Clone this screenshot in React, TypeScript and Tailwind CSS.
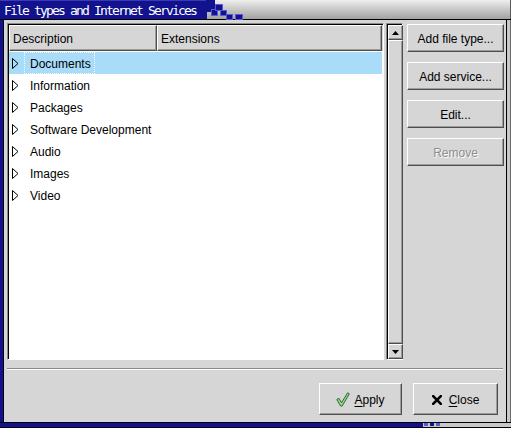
import React from "react";

const rows = ["Documents", "Information", "Packages", "Software Development", "Audio", "Images", "Video"];

function Raised({ className = "", children }: { className?: string; children?: React.ReactNode }) {
  return (
    <div
      className={
        "border-t border-l border-t-white border-l-white border-b border-r border-b-[#4e4e4e] border-r-[#4e4e4e] shadow-[inset_-1px_-1px_0_#9c9c9c] bg-[#d6d6d6] " +
        className
      }
    >
      {children}
    </div>
  );
}

function Tri() {
  return (
    <svg width="7" height="11" viewBox="0 0 7 11" className="shrink-0">
      <path d="M0.5 0.5 L6 5.5 L0.5 10.5 Z" fill="none" stroke="#000" strokeWidth="1" />
    </svg>
  );
}

function Arrow({ up }: { up?: boolean }) {
  return (
    <svg width="7" height="4" viewBox="0 0 7 4">
      {up ? <path d="M0 4 L3.5 0 L7 4 Z" fill="#000" /> : <path d="M0 0 L3.5 4 L7 0 Z" fill="#000" />}
    </svg>
  );
}

export default function App() {
  return (
    <div className="relative w-[511px] h-[428px] flex flex-col overflow-hidden bg-[#d6d6d6] font-['Liberation_Sans',Arial,sans-serif] text-[12px] text-black">
      {/* Title bar */}
      <div className="relative h-[20px] flex border-b border-black shrink-0">
        <div className="w-[207px] bg-[#12128e] border-t border-t-[#3a3ab4] pl-[4px] pt-[2px] text-white font-['DejaVu_Sans_Mono',monospace] text-[13px] leading-[15px] tracking-[-1.83px] whitespace-nowrap">
          File types and Internet Services
        </div>
        <div className="flex-1 bg-linear-to-b from-[#efefef] to-[#a2a2a2] border-r border-r-[#5a5a5a]" />
        <div className="absolute left-[206px] top-0 w-[9px] h-[12px] bg-[#12128e]" />
        <div className="absolute left-[211px] top-[9px] w-[7px] h-[7px] bg-[#12128e] border border-[#5a5ad0]" />
        <div className="absolute left-[215px] top-[4px] w-[8px] h-[7px] bg-[#12128e] border border-[#5a5ad0]" />
        <div className="absolute left-[220px] top-[10px] w-[7px] h-[6px] bg-[#12128e] border border-[#5a5ad0]" />
        <div className="absolute left-[226px] top-[14px] w-[7px] h-[6px] bg-[#12128e] border border-[#5a5ad0]" />
        <div className="absolute left-[235px] top-[14px] w-[8px] h-[6px] bg-[#12128e] border border-[#5a5ad0]" />
      </div>

      {/* Middle */}
      <div className="flex flex-1 min-h-0">
        <div className="w-[4px] bg-[#12128e] border-r border-black" />
        <div className="w-[502px] flex flex-col bg-[#d6d6d6]">
          <div className="flex pt-[3px] pl-[3px]">
            {/* List */}
            <div className="w-[377px] h-[337px] border-t border-l border-t-[#8a8a8a] border-l-[#8a8a8a] border-b border-r border-b-white border-r-white">
              <div className="w-full h-full bg-white border-t border-l border-t-black border-l-black flex flex-col">
                <div className="flex h-[26px] shrink-0 bg-[#d6d6d6]">
                  <Raised className="w-[148px] h-full flex items-center pl-[3px] pt-[2px]">Description</Raised>
                  <Raised className="flex-1 h-full flex items-center pl-[3px] pt-[2px] mr-[1px]">Extensions</Raised>
                </div>
                <div className="flex flex-col mt-[1px] mr-[1px]">
                  {rows.map((r, i) => (
                    <div key={r} className={"h-[22px] flex items-center pl-[3px] " + (i === 0 ? "bg-[#a8dcf9]" : "")}>
                      <Tri />
                      <div
                        className={
                          "ml-[5px] h-full flex items-center pl-[5px] pr-[3px] pt-[2px] border border-dotted " +
                          (i === 0 ? "border-white" : "border-transparent")
                        }
                      >
                        {r}
                      </div>
                    </div>
                  ))}
                </div>
              </div>
            </div>

            {/* Scrollbar */}
            <div className="ml-[2px] w-[17px] h-[337px] border-t border-l border-t-[#8a8a8a] border-l-[#8a8a8a] border-b border-r border-b-white border-r-white">
              <div className="w-full h-full bg-[#c4c4c4] border-t border-l border-t-black border-l-black flex flex-col">
                <Raised className="h-[15px] w-[15px] shrink-0 flex items-center justify-center">
                  <Arrow up />
                </Raised>
                <Raised className="flex-1 w-[15px]" />
                <Raised className="h-[15px] w-[15px] shrink-0 flex items-center justify-center">
                  <Arrow />
                </Raised>
              </div>
            </div>

            {/* Buttons */}
            <div className="ml-[4px] mt-[1px] w-[97px] flex flex-col gap-[10px]">
              <Raised className="h-[28px] flex items-center justify-center pt-[2px]">Add file type...</Raised>
              <Raised className="h-[28px] flex items-center justify-center pt-[2px]">Add service...</Raised>
              <Raised className="h-[28px] flex items-center justify-center pt-[2px]">Edit...</Raised>
              <Raised className="h-[28px] flex items-center justify-center pt-[2px] text-[#8e8e8e] [text-shadow:1px_1px_0_#ffffff]">
                Remove
              </Raised>
            </div>
          </div>

          {/* Separator */}
          <div className="mt-[8px] mx-[3px] h-[2px] border-t border-t-[#8a8a8a] border-b border-b-white" />

          {/* Bottom buttons */}
          <div className="mt-[13px] flex justify-end pr-[8px] gap-[11px]">
            <Raised className="w-[83px] h-[32px] flex items-center justify-center gap-[4px] pt-[1px]">
              <svg width="14" height="15" viewBox="0 0 14 15">
                <path
                  d="M0.8 7.5 L3 6.3 L5.5 10.8 L11.6 0.8 L13.3 1.8 L6.2 14 L4.6 14 Z"
                  fill="#9ad69a"
                  stroke="#2f6a2f"
                  strokeWidth="1"
                  strokeLinejoin="round"
                />
              </svg>
              <span className="pt-[1px]">
                <span className="underline underline-offset-[2px]">A</span>pply
              </span>
            </Raised>
            <Raised className="w-[85px] h-[32px] flex items-center justify-center gap-[7px] pt-[1px]">
              <svg width="10" height="10" viewBox="0 0 10 10">
                <path d="M1.2 1.2 L8.8 8.8 M8.8 1.2 L1.2 8.8" stroke="#000" strokeWidth="2.6" strokeLinecap="square" />
              </svg>
              <span className="pt-[1px]">
                <span className="underline underline-offset-[2px]">C</span>lose
              </span>
            </Raised>
          </div>
        </div>
        <div className="w-[5px] bg-[#c8c8c8] border-l border-l-black border-r border-r-[#6a6a6a]" />
      </div>

      {/* Bottom frame */}
      <div className="relative h-[6px] shrink-0 flex border-t border-black border-b border-b-black">
        <div className="w-[423px] bg-[#12128e]" />
        <div className="flex-1 bg-[#c8c8c8]" />
        <div className="absolute left-[424px] top-0 w-[4px] h-[3px] bg-[#5a5ad0]" />
        <div className="absolute left-[430px] top-0 w-[4px] h-[3px] bg-[#12128e]" />
        <div className="absolute left-[436px] top-0 w-[4px] h-[3px] bg-[#5a5ad0]" />
      </div>
    </div>
  );
}
